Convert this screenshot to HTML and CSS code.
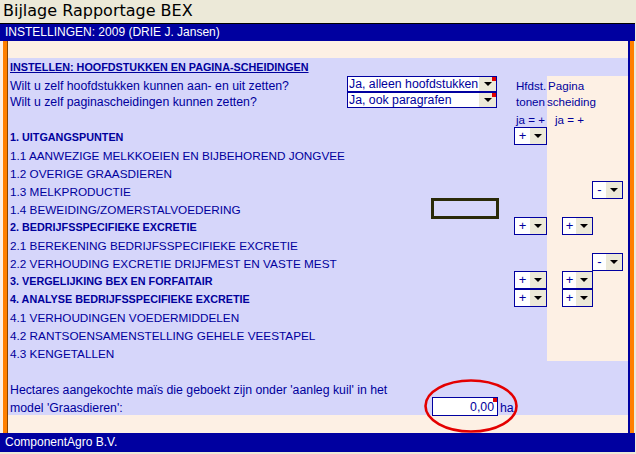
FILE: index.html
```html
<!DOCTYPE html>
<html>
<head>
<meta charset="utf-8">
<link rel="stylesheet" href="styles.css">
</head>
<body>
<div class="title">Bijlage Rapportage BEX</div>
<div class="sheet">
  <div class="bar top">INSTELLINGEN: 2009 (DRIE J. Jansen)</div>
  <div class="frame">
    <div class="edge-l"></div>
    <div class="orange-l"></div>
    <div class="content">
      <div class="band"></div>
      <div class="grid">
        <div class="row h18">
          <div class="lab b u">INSTELLEN: HOOFDSTUKKEN EN PAGINA-SCHEIDINGEN</div>
          <div class="mid"></div><div class="c1"></div><div class="c2"></div>
        </div>
        <div class="row h16">
          <div class="lab lc">Wilt u zelf hoofdstukken kunnen aan- en uit zetten?</div>
          <div class="mid"><div class="dd wide mark"><span class="v">Ja, alleen hoofdstukken</span><span class="btn"><i class="tri"></i></span></div></div>
          <div class="c1"><span class="txt">Hfdst.</span></div>
          <div class="c2 cr"><span class="txt p1">Pagina</span></div>
        </div>
        <div class="row h16">
          <div class="lab lc">Wilt u zelf paginascheidingen kunnen zetten?</div>
          <div class="mid"><div class="dd wide mark"><span class="v">Ja, ook paragrafen</span><span class="btn"><i class="tri"></i></span></div></div>
          <div class="c1"><span class="txt">tonen</span></div>
          <div class="c2 cr"><span class="txt p0">scheiding</span></div>
        </div>
        <div class="row h19">
          <div class="lab"></div><div class="mid"></div>
          <div class="c1"><span class="txt">ja = +</span></div>
          <div class="c2 cr"><span class="txt p8">ja = +</span></div>
        </div>
        <div class="row h18">
          <div class="lab b">1. UITGANGSPUNTEN</div><div class="mid"></div>
          <div class="c1"><div class="dd sm"><span class="v">+</span><span class="btn"><i class="tri"></i></span></div></div>
          <div class="c2 cr"></div>
        </div>
        <div class="row h18">
          <div class="lab">1.1 AANWEZIGE MELKKOEIEN EN BIJBEHOREND JONGVEE</div><div class="mid"></div><div class="c1"></div><div class="c2 cr"></div>
        </div>
        <div class="row h18">
          <div class="lab">1.2 OVERIGE GRAASDIEREN</div><div class="mid"></div><div class="c1"></div><div class="c2 cr"></div>
        </div>
        <div class="row h18">
          <div class="lab">1.3 MELKPRODUCTIE</div><div class="mid"></div><div class="c1"></div>
          <div class="c2 cr"><div class="dd xs far"><span class="v">-</span><span class="btn"><i class="tri"></i></span></div></div>
        </div>
        <div class="row h18">
          <div class="lab">1.4 BEWEIDING/ZOMERSTALVOEDERING</div>
          <div class="mid"><div class="sel"></div></div><div class="c1"></div><div class="c2 cr"></div>
        </div>
        <div class="row h18">
          <div class="lab b">2. BEDRIJFSSPECIFIEKE EXCRETIE</div><div class="mid"></div>
          <div class="c1"><div class="dd sm"><span class="v">+</span><span class="btn"><i class="tri"></i></span></div></div>
          <div class="c2 cr"><div class="dd xs near"><span class="v">+</span><span class="btn"><i class="tri"></i></span></div></div>
        </div>
        <div class="row h18">
          <div class="lab">2.1 BEREKENING BEDRIJFSSPECIFIEKE EXCRETIE</div><div class="mid"></div><div class="c1"></div><div class="c2 cr"></div>
        </div>
        <div class="row h18">
          <div class="lab">2.2 VERHOUDING EXCRETIE DRIJFMEST EN VASTE MEST</div><div class="mid"></div><div class="c1"></div>
          <div class="c2 cr"><div class="dd xs far"><span class="v">-</span><span class="btn"><i class="tri"></i></span></div></div>
        </div>
        <div class="row h18">
          <div class="lab b">3. VERGELIJKING BEX EN FORFAITAIR</div><div class="mid"></div>
          <div class="c1"><div class="dd sm"><span class="v">+</span><span class="btn"><i class="tri"></i></span></div></div>
          <div class="c2 cr"><div class="dd xs near"><span class="v">+</span><span class="btn"><i class="tri"></i></span></div></div>
        </div>
        <div class="row h18">
          <div class="lab b">4. ANALYSE BEDRIJFSSPECIFIEKE EXCRETIE</div><div class="mid"></div>
          <div class="c1"><div class="dd sm"><span class="v">+</span><span class="btn"><i class="tri"></i></span></div></div>
          <div class="c2 cr"><div class="dd xs near"><span class="v">+</span><span class="btn"><i class="tri"></i></span></div></div>
        </div>
        <div class="row h18">
          <div class="lab">4.1 VERHOUDINGEN VOEDERMIDDELEN</div><div class="mid"></div><div class="c1"></div><div class="c2 cr"></div>
        </div>
        <div class="row h18">
          <div class="lab">4.2 RANTSOENSAMENSTELLING GEHELE VEESTAPEL</div><div class="mid"></div><div class="c1"></div><div class="c2 cr"></div>
        </div>
        <div class="row h18">
          <div class="lab">4.3 KENGETALLEN</div><div class="mid"></div><div class="c1"></div><div class="c2 cr"></div>
        </div>
        <div class="row h18"></div>
        <div class="row h18">
          <div class="lab lc wide-lab">Hectares aangekochte maïs die geboekt zijn onder 'aanleg kuil' in het</div>
        </div>
        <div class="row h18">
          <div class="lab lc model">model 'Graasdieren':</div>
          <div class="inp mark"><span class="num">0,00</span><svg class="ring" width="98" height="56" viewBox="0 0 98 56"><ellipse cx="49" cy="28" rx="45.5" ry="25.5" fill="none" stroke="#E40000" stroke-width="2.6"/></svg></div>
          <span class="unit">ha</span>
        </div>
      </div>
      <div class="band2"></div>
    </div>
    <div class="edge-r"></div>
    <div class="orange-r"></div>
    <div class="edge-rr"></div>
  </div>
  <div class="bar foot">ComponentAgro B.V.</div>
</div>
</body>
</html>
```

FILE: styles.css
```css
* { box-sizing: border-box; }

body {
  margin: 0;
  width: 636px;
  height: 454px;
  overflow: hidden;
  background: #ECE9D8;
  font-family: "Liberation Sans", Arial, sans-serif;
}

.title {
  height: 23px;
  padding-left: 3px;
  font-family: "DejaVu Sans", sans-serif;
  font-size: 16px;
  line-height: 21px;
  color: #000;
}

.sheet { width: 635px; }

.bar {
  background: #0000A0;
  color: #fff;
  font-size: 12px;
  padding-left: 5px;
  white-space: nowrap;
}
.bar.top {
  height: 18px;
  line-height: 17px;
  border-top: 1px solid #000;
}
.bar.foot {
  height: 19px;
  line-height: 19px;
}

.frame {
  display: flex;
  background: #FDF0E4;
}
.edge-l { width: 3px; background: #FDF0E4; }
.orange-l { width: 5px; background: #FF8000; border-right: 1px solid #8A4500; }
.content { width: 620px; }
.edge-r { width: 2px; background: #0000A0; }
.orange-r { width: 4px; background: #FF8000; }
.edge-rr { width: 1px; background: #ECE9D8; }

.band { height: 17px; background: #FDF0E4; }
.band2 { height: 18px; background: #FDF0E4; }

.grid { background: #D6D6FA; }

.row { display: flex; }
.h16 { height: 16px; }
.h18 { height: 18px; }
.h19 { height: 19px; }

.row > div { display: flex; align-items: center; }

.lab {
  width: 339px;
  padding-left: 2px;
  padding-top: 3px;
  font-size: 11.75px;
  color: #00009C;
  white-space: nowrap;
}
.lab.lc { font-size: 12.3px; }
.lab.b {
  font-weight: bold;
  font-size: 10.8px;
  padding-top: 1px;
}
.lab.u { text-decoration: underline; padding-top: 0; }
.lab.wide-lab { width: 620px; }
.lab.model { width: 424px; }

.mid { width: 167px; }
.c1 { width: 33px; }
.c2 { width: 81px; }
.cr { background: #FDF0E4; }

.txt {
  font-size: 11.6px;
  color: #00009C;
  white-space: nowrap;
  padding-left: 2px;
  padding-top: 3px;
}
.txt.p0 { padding-left: 0; }
.txt.p1 { padding-left: 1px; }
.txt.p8 { padding-left: 8px; }

.dd {
  position: relative;
  display: flex;
  height: 18px;
  background: #fff;
  border: 1px solid #0000A0;
}
.dd.wide { width: 150px; height: 16px; }
.dd.sm { width: 33px; }
.dd.xs { width: 31px; }
.dd.near { margin-left: 15px; }
.dd.far { margin-left: 45px; }

.dd .v {
  flex: 1;
  font-size: 13px;
  color: #0000A0;
  text-align: center;
  line-height: 16px;
}
.dd.wide .v {
  text-align: left;
  padding-left: 1px;
  font-size: 12.3px;
  line-height: 14px;
  color: #00009C;
  white-space: nowrap;
}
.dd .btn {
  width: 16px;
  background: #ECE9D8;
  display: flex;
  align-items: center;
  justify-content: center;
}
.dd.wide .btn { width: 17px; }

.tri {
  width: 0;
  height: 0;
  border-left: 4px solid transparent;
  border-right: 4px solid transparent;
  border-top: 4px solid #000;
}

.mark::after {
  content: "";
  position: absolute;
  top: 0;
  right: 0;
  width: 4px;
  height: 4px;
  background: #E00000;
}

.sel {
  margin-left: 84px;
  width: 68px;
  height: 21px;
  border: 3px solid #2A2A08;
}

.row > .inp {
  position: relative;
  width: 66px;
  height: 19px;
  background: #fff;
  border: 1px solid #0000A0;
  justify-content: flex-end;
  padding-right: 3px;
  align-self: flex-start;
}
.num {
  font-size: 12.3px;
  color: #00009C;
  padding-top: 1px;
}
.ring {
  position: absolute;
  left: -11px;
  top: -20px;
  pointer-events: none;
}
.unit {
  font-size: 12.3px;
  color: #00009C;
  margin-left: 2px;
  align-self: center;
  padding-top: 3px;
}
```
